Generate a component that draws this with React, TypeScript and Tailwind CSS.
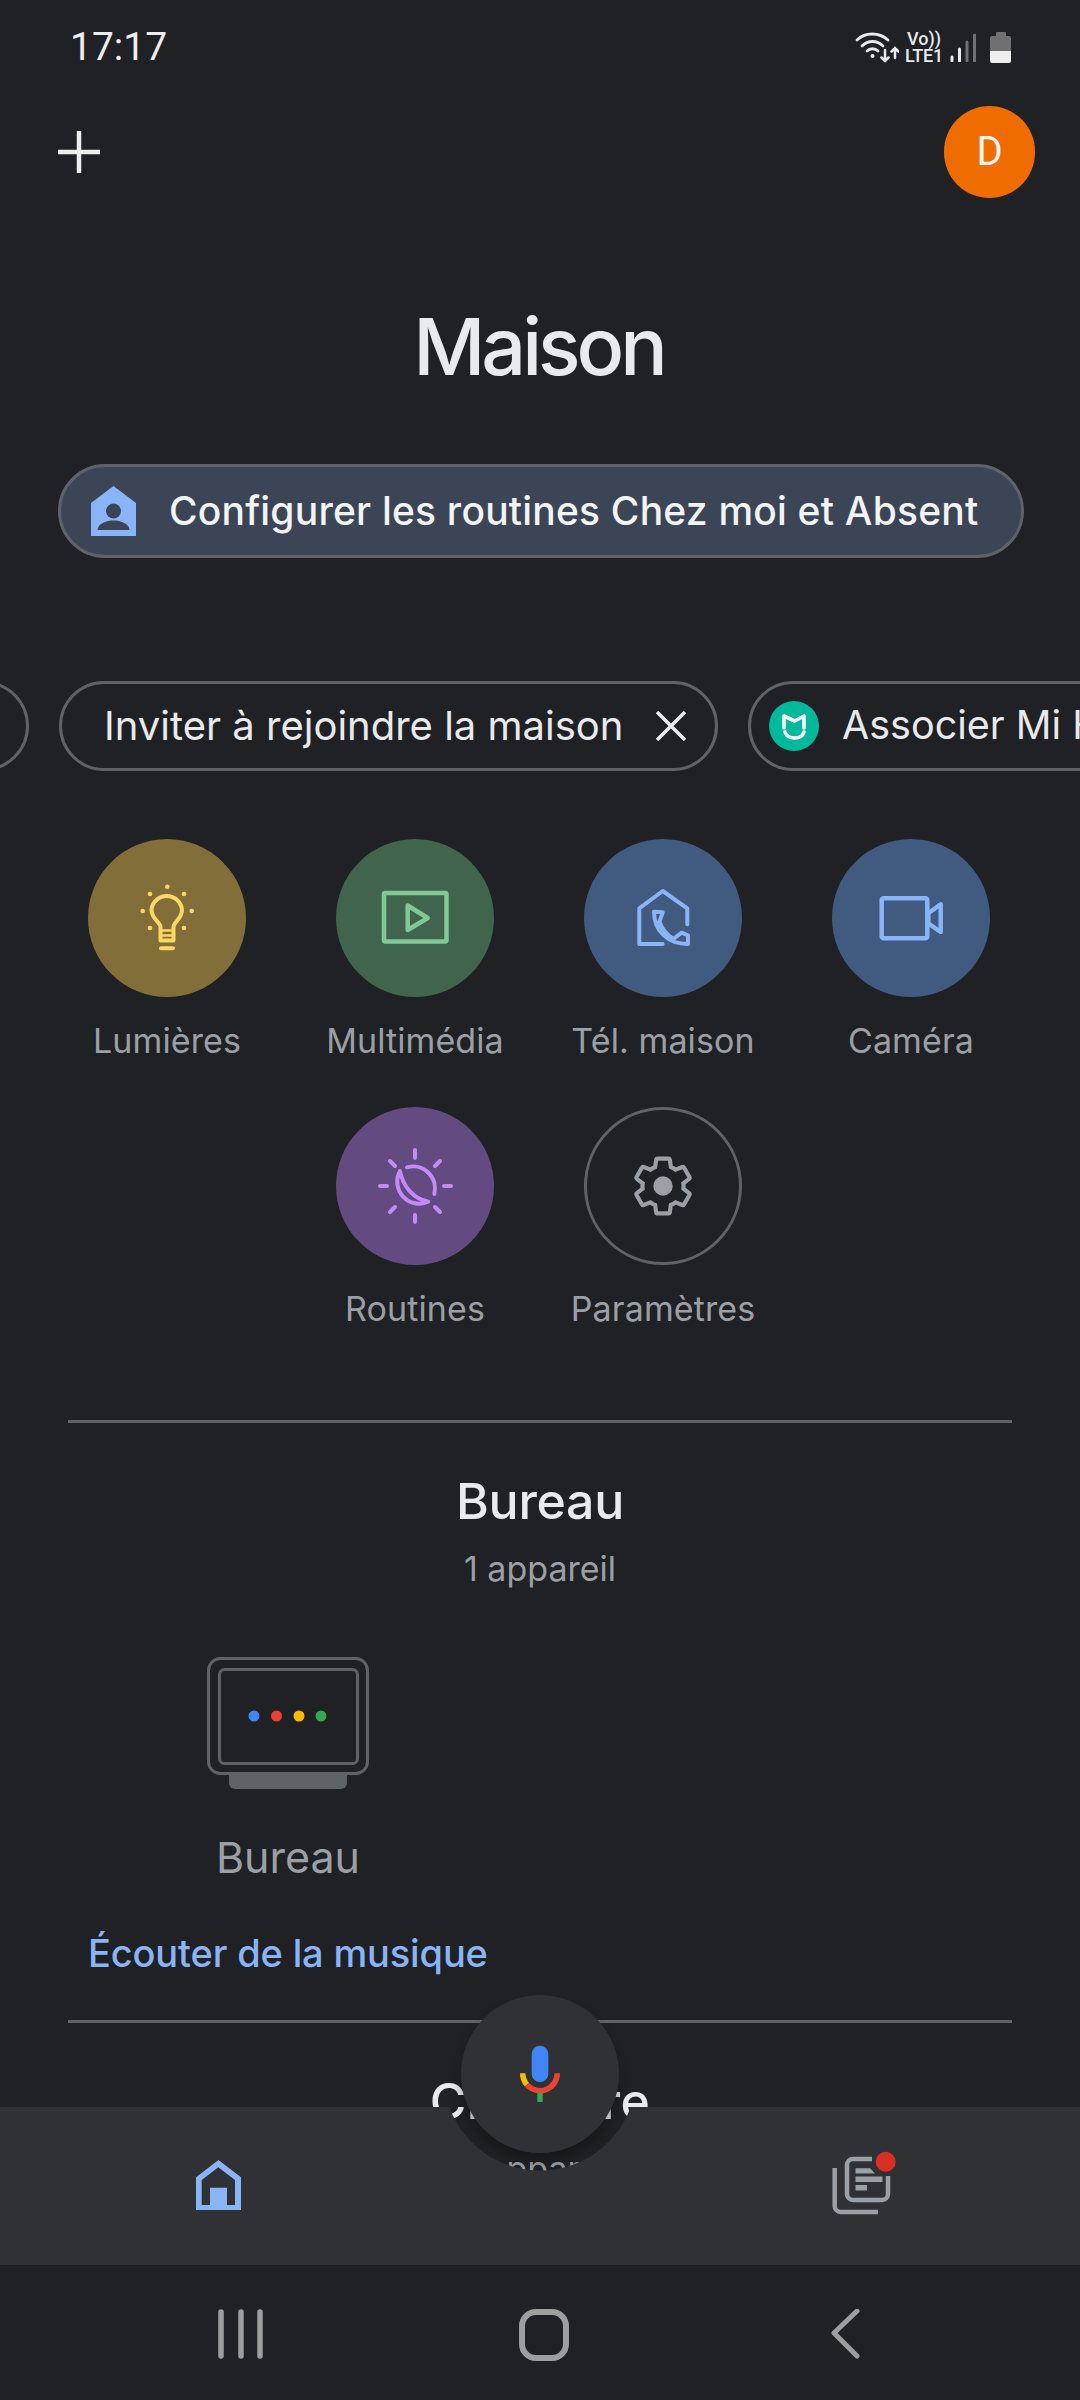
import React from "react";

function Circle({ bg, children }: { bg: string; children: React.ReactNode }) {
  return <div className={`w-[158px] h-[158px] rounded-full ${bg}`}>{children}</div>;
}

const Bulb = () => (
  <svg width="158" height="158" viewBox="0 0 158 158" fill="none" stroke="#fdd663" strokeWidth="4" strokeLinecap="round" strokeLinejoin="round">
    <path d="M72.5 88C72.5 83 63.5 80 63.5 71A15.3 15.3 0 0 1 94 71C94 80 85.5 83 85.5 88V101.5H72.5Z" />
    <path d="M72.5 91.5H85.5M72.5 96.5H85.5" strokeWidth="2.5" />
    <path d="M73 109.3H85" />
    <g fill="#fdd663" stroke="none">
      <circle cx="79.3" cy="47.7" r="2.3" />
      <circle cx="62" cy="55" r="2.3" />
      <circle cx="96" cy="55" r="2.3" />
      <circle cx="54.7" cy="72" r="2.3" />
      <circle cx="103.7" cy="72" r="2.3" />
      <circle cx="62" cy="89" r="2.3" />
      <circle cx="96" cy="89" r="2.3" />
    </g>
  </svg>
);

const Media = () => (
  <svg width="158" height="158" viewBox="0 0 158 158" fill="none" stroke="#81c995" strokeWidth="4.5" strokeLinejoin="round">
    <rect x="48" y="54" width="62.5" height="48.5" rx="1.5" />
    <path d="M71.7 66.5V91L91.7 79Z" />
  </svg>
);

const PhoneHome = () => (
  <svg width="158" height="158" viewBox="0 0 158 158" fill="none" stroke="#8ab4f8" strokeWidth="4" strokeLinecap="round" strokeLinejoin="round">
    <path d="M78.7 105H55.3V69.3L78.7 52L103.3 69.3V85.3" />
    <path d="M70 72.7L78.7 73.3L75.5 82.7C78 90 83 96 89.3 100L97.7 93.7L104 96.3V105C84 105 70 92 70 72.7Z" />
  </svg>
);

const Camera = () => (
  <svg width="158" height="158" viewBox="0 0 158 158" fill="none" stroke="#8ab4f8" strokeWidth="4.5" strokeLinejoin="round">
    <rect x="49.7" y="59.3" width="45.6" height="40" rx="2" />
    <path d="M96.3 74.3L108.7 65.3V93L96.3 84.3Z" />
  </svg>
);

const RoutineIcon = () => (
  <svg width="158" height="158" viewBox="0 0 158 158" fill="none" stroke="#c58af9" strokeWidth="4" strokeLinecap="round" strokeLinejoin="round">
    <path d="M79 43V51M79 108V115M44 79H51M108 79H115M54 54L59 59M104 54L99 59M54 105L59 100M104 105L99 100" />
    <path d="M64 64C67 80 78 92 92.3 94.7A22 22 0 0 1 64 64Z" />
    <path d="M71 60.3A22 22 0 0 1 98.3 87" />
  </svg>
);

const Gear = () => (
  <svg width="158" height="158" viewBox="-15.7 -15.7 55.4 55.4" fill="none" stroke="#9aa0a6" strokeWidth="1.45">
    <path d="M19.14 12.94c.04-.3.06-.61.06-.94 0-.32-.02-.64-.07-.94l2.03-1.58c.18-.14.23-.41.12-.61l-1.92-3.32c-.12-.22-.37-.29-.59-.22l-2.39.96c-.5-.38-1.03-.7-1.62-.94l-.36-2.54c-.04-.24-.24-.41-.48-.41h-3.84c-.24 0-.43.17-.47.41l-.36 2.54c-.59.24-1.13.57-1.62.94l-2.39-.96c-.22-.08-.47 0-.59.22L2.74 8.87c-.12.21-.08.47.12.61l2.03 1.58c-.05.3-.09.63-.09.94s.02.64.07.94l-2.03 1.58c-.18.14-.23.41-.12.61l1.92 3.32c.12.22.37.29.59.22l2.39-.96c.5.38 1.03.7 1.62.94l.36 2.54c.05.24.24.41.48.41h3.84c.24 0 .44-.17.47-.41l.36-2.54c.59-.24 1.13-.56 1.62-.94l2.39.96c.22.08.47 0 .59-.22l1.92-3.32c.12-.22.07-.47-.12-.61l-2.01-1.58z" />
    <circle cx="12" cy="12" r="3.4" fill="#9aa0a6" stroke="none" />
  </svg>
);

function Action({ circle, icon, label, className }: { circle: string; icon: React.ReactNode; label: string; className?: string }) {
  return (
    <div className={`flex flex-col items-center h-[268px] ${className ?? ""}`}>
      <Circle bg={circle}>{icon}</Circle>
      <div className="mt-[24px] h-[40px] leading-[40px] text-[34px] tracking-[0.1px] text-[#9aa0a6] whitespace-nowrap">{label}</div>
    </div>
  );
}

function RoomHead({ name, sub, tracking }: { name: string; sub: string; tracking: string }) {
  return (
    <div className="flex flex-col items-center">
      <div className={`mt-[48px] h-[60px] leading-[60px] text-[50px] text-[#e8eaed] font-medium ${tracking}`}>{name}</div>
      <div className="mt-[18px] h-[40px] leading-[40px] text-[34px] text-[#9aa0a6]">{sub}</div>
    </div>
  );
}

const StatusIcons = () => (
  <div className="flex items-center h-[40px]">
    <svg width="44" height="36" viewBox="0 0 44 36" fill="none" stroke="#e8eaed" strokeWidth="2.8" strokeLinecap="round">
      <path d="M2 11C10 3 24 3 33 11M7 17C13 11 22 11 28 17M12 22C15 19 20 19 23 22" />
      <circle cx="17.5" cy="27" r="2" fill="#e8eaed" stroke="none" />
      <path d="M30 21V32M26.5 28.5L30 32L33.5 28.5M40 29V19M36.5 22.5L40 19L43.5 22.5" strokeWidth="2.5" />
    </svg>
    <div className="ml-[5px] flex flex-col items-center w-[40px] font-[Roboto,sans-serif] font-medium text-[#e8eaed]">
      <span className="h-[15px] leading-[15px] text-[18px]">Vo))</span>
      <span className="mt-[2px] h-[15px] leading-[15px] text-[18px] tracking-[-0.2px]">LTE1</span>
    </div>
    <svg className="ml-[5px]" width="30" height="30" viewBox="0 0 30 30" strokeLinecap="round" strokeWidth="3">
      <path d="M3 29V25M10.5 29V17" stroke="#e8eaed" />
      <path d="M18 29V10M25.5 29V3" stroke="#6f7174" />
    </svg>
    <div className="ml-[11px] flex flex-col items-center w-[21px]">
      <div className="w-[10px] h-[4px] bg-[#707072] rounded-t-[1px]" />
      <div className="w-[21px] h-[15px] bg-[#707072] rounded-t-[2px]" />
      <div className="w-[21px] h-[12px] bg-[#eeeeee] rounded-b-[2px]" />
    </div>
  </div>
);

export default function App() {
  return (
    <div className="relative w-[1080px] h-[2400px] overflow-hidden bg-[#202124] font-[Inter,sans-serif] text-[#e8eaed]">
      <div className="flex h-[94px] items-center justify-between pl-[70px] pr-[69px]">
        <span className="mt-[1px] font-[Roboto,sans-serif] text-[39px] leading-none text-[#eeeeee]">17:17</span>
        <StatusIcons />
      </div>

      <div className="mt-[12px] flex h-[92px] items-center justify-between pl-[58px] pr-[45px]">
        <svg width="42" height="42" viewBox="0 0 42 42" stroke="#eeeeee" strokeWidth="4.5">
          <path d="M0 21H42M21 0V42" />
        </svg>
        <div className="w-[91px] h-[92px] rounded-full bg-[#ef6c00] flex items-center justify-center font-[Roboto,sans-serif] text-[40px] text-[#f3f3f3]">D</div>
      </div>

      <h1 className="mt-[100px] h-[96px] leading-[96px] pr-[3px] text-center text-[79px] font-medium tracking-[-4px] text-[#e8eaed]">Maison</h1>

      <div className="ml-[58px] mt-[70px] flex h-[94px] w-[966px] items-center rounded-full border-[3px] border-[#5f6368] bg-[#3c4556] pl-[30px]">
        <svg width="45" height="50" viewBox="0 0 45 50">
          <path d="M22.5 0L45 17V50H0V17Z" fill="#8ab4f8" />
          <circle cx="22.5" cy="25" r="7.5" fill="#3c4556" />
          <path d="M6.5 44C7 37 16 34.5 22.5 34.5S38 37 38.5 44Z" fill="#3c4556" />
        </svg>
        <span className="ml-[33px] text-[39px] font-medium tracking-[0.2px] whitespace-nowrap text-[#f1f3f4]">Configurer les routines Chez moi et Absent</span>
      </div>

      <div className="mt-[123px] flex h-[90px] gap-[30px] whitespace-nowrap">
        <div className="ml-[-171px] h-[90px] w-[200px] shrink-0 rounded-full border-[3px] border-[#5f6368]" />
        <div className="flex h-[90px] w-[659px] shrink-0 items-center rounded-full border-[3px] border-[#5f6368] pl-[42px]">
          <span className="text-[40px]">Inviter à rejoindre la maison</span>
          <svg className="ml-[33px]" width="30" height="30" viewBox="0 0 30 30" stroke="#e8eaed" strokeWidth="3.5">
            <path d="M1 1L29 29M29 1L1 29" />
          </svg>
        </div>
        <div className="flex h-[90px] w-[500px] shrink-0 items-center rounded-full border-[3px] border-[#5f6368] pl-[18px]">
          <svg width="50" height="50" viewBox="0 0 50 50" fill="none" stroke="#ffffff" strokeWidth="3.6" strokeLinecap="round" strokeLinejoin="round">
            <circle cx="25" cy="25" r="25" fill="#00b89c" stroke="none" />
            <path d="M15 15L25.7 20L35 15V27M15 15V27M16 31Q18 37 25.7 37Q33 37 35 31" />
          </svg>
          <span className="ml-[23px] text-[39.5px]">Associer Mi Home</span>
        </div>
      </div>

      <div className="ml-[43px] mt-[68px] grid w-[992px] grid-cols-4">
        <Action circle="bg-[#826e39]" icon={<Bulb />} label="Lumières" />
        <Action circle="bg-[#41644c]" icon={<Media />} label="Multimédia" />
        <Action circle="bg-[#415a7f]" icon={<PhoneHome />} label="Tél. maison" />
        <Action circle="bg-[#415a7f]" icon={<Camera />} label="Caméra" />
        <Action className="col-start-2" circle="bg-[#634a80]" icon={<RoutineIcon />} label="Routines" />
        <Action circle="border-[3px] border-[#5f6368] [&>svg]:m-[-3px]" icon={<Gear />} label="Paramètres" />
      </div>

      <div className="mx-[68px] mt-[45px] h-[3px] bg-[#5f6368]" />
      <RoomHead name="Bureau" sub="1 appareil" tracking="tracking-[-0.3px]" />

      <div className="ml-[88px] mt-[68px] flex w-[400px] flex-col items-center">
        <svg width="162" height="132" viewBox="0 0 162 132" fill="none" stroke="#5f6368" strokeWidth="3">
          <path d="M22 118H140V126A6 6 0 0 1 134 132H28A6 6 0 0 1 22 126Z" fill="#5f6368" stroke="none" />
          <rect x="1.5" y="1.5" width="159" height="115" rx="12" fill="#202124" />
          <rect x="12.5" y="12.5" width="138" height="94" rx="5" />
          <g stroke="none">
            <circle cx="47" cy="59" r="5.5" fill="#4285f4" />
            <circle cx="69.5" cy="59" r="5.5" fill="#ea4335" />
            <circle cx="92" cy="59" r="5.5" fill="#fbbc04" />
            <circle cx="114" cy="59" r="5.5" fill="#34a853" />
          </g>
        </svg>
        <div className="mt-[43px] h-[50px] leading-[50px] text-[43px] text-[#9aa0a6]">Bureau</div>
      </div>

      <div className="ml-[88px] mt-[46px] h-[50px] leading-[50px] text-[38px] font-medium tracking-[-0.15px] text-[#8ab4f8]">Écouter de la musique</div>

      <div className="mx-[68px] mt-[42px] h-[3px] bg-[#5f6368]" />
      <RoomHead name="Chambre" sub="1 appareil" tracking="tracking-[0.3px]" />

      <div className="absolute left-[461px] top-[1995px] flex h-[158px] w-[158px] items-center justify-center rounded-full bg-[#303134] shadow-[0_10px_12px_rgba(0,0,0,0.28)]">
        <svg width="70" height="70" viewBox="0 0 70 70" fill="none">
          <rect x="26.7" y="6.7" width="16.6" height="36.6" rx="8.3" fill="#4285f4" />
          <path d="M17.7 34.3A17.3 17.3 0 0 0 22 45.8" stroke="#fbbc04" strokeWidth="5.5" />
          <path d="M22 45.8A17.3 17.3 0 0 0 52.3 34.3" stroke="#ea4335" strokeWidth="5.5" />
          <rect x="32.3" y="54" width="5.4" height="9" fill="#34a853" />
        </svg>
      </div>

      <div className="absolute bottom-0 left-0 w-full">
        <div className="flex h-[158px] w-full bg-[#303134] [mask-image:radial-gradient(circle_at_540px_-33px,transparent_96px,black_97px)]">
          <div className="ml-[196px] mt-[53px]">
            <svg width="46" height="51" viewBox="0 0 46 51">
              <path fillRule="evenodd" fill="#8ab4f8" d="M22.5 0L45 17.3V50H0V17.3ZM22.3 7.3L5.7 20V45H14V27.7H31V45H39V20Z" />
            </svg>
          </div>
          <div className="ml-[578px] mt-[33px]">
            <svg width="90" height="90" viewBox="0 0 90 90" fill="none" stroke="#9aa0a6" strokeWidth="4.5">
              <path d="M14.7 28V66A6 6 0 0 0 20.7 72H58" />
              <path d="M52 19H33A6 6 0 0 0 27 25V54A6 6 0 0 0 33 60H62A6 6 0 0 0 68 54V36" />
              <g fill="#9aa0a6" stroke="none">
                <path d="M35.5 28.3H50L55 33.5H35.5Z" />
                <rect x="35.5" y="36.5" width="27" height="5.5" />
                <rect x="35.5" y="45" width="11.5" height="5.5" />
              </g>
              <circle cx="65.7" cy="21.7" r="10" fill="#d93025" stroke="none" />
            </svg>
          </div>
        </div>
        <div className="flex h-[135px] items-start bg-[#202124] pt-[44px]">
          <svg className="ml-[218px]" width="46" height="50" viewBox="0 0 46 50" stroke="#9e9e9e" strokeWidth="5.5" strokeLinecap="round">
            <path d="M3 3V47M23 3V47M42 3V47" />
          </svg>
          <svg className="ml-[253px]" width="54" height="54" viewBox="0 0 54 54" fill="none" stroke="#9e9e9e" strokeWidth="6">
            <rect x="5" y="3" width="44" height="46" rx="14" />
          </svg>
          <svg className="ml-[260px]" width="30" height="50" viewBox="0 0 30 50" fill="none" stroke="#9e9e9e" strokeWidth="5" strokeLinecap="round" strokeLinejoin="round">
            <path d="M26 2L3 24L26 47" />
          </svg>
        </div>
      </div>
    </div>
  );
}
